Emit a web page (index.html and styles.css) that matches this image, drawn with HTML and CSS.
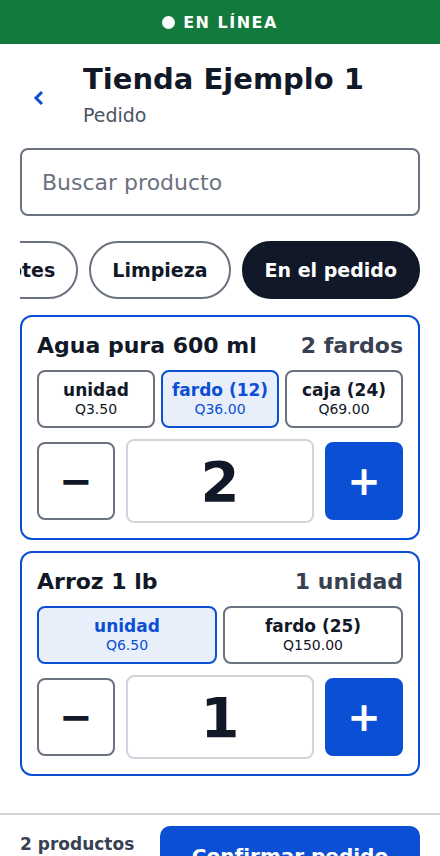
FILE: index.html
```html
<!DOCTYPE html>
<html lang="es">
<head>
  <meta charset="UTF-8">
  <title>Pedido - Tienda Ejemplo 1</title>
  <link rel="stylesheet" href="styles.css">
</head>
<body>
  <div class="status"><span class="status-dot"></span>EN LÍNEA</div>

  <header class="top">
    <button class="back" aria-label="Volver">
      <svg width="12" height="16" viewBox="0 0 12 16">
        <polyline points="9,2 3,8 9,14" fill="none" stroke="#0b50d4" stroke-width="3"/>
      </svg>
    </button>
    <div class="top-text">
      <h1>Tienda Ejemplo 1</h1>
      <p>Pedido</p>
    </div>
  </header>

  <main class="page">
    <input class="search" type="text" placeholder="Buscar producto">

    <!-- categorias, desplazadas hasta el final -->
    <div class="chips">
      <button class="chip">Todos</button>
      <button class="chip">Bebidas</button>
      <button class="chip">Abarrotes</button>
      <button class="chip">Limpieza</button>
      <button class="chip active">En el pedido</button>
    </div>

    <section class="item">
      <div class="item-head">
        <span>Agua pura 600 ml</span>
        <span class="item-count">2 fardos</span>
      </div>
      <div class="units">
        <button class="unit">
          <span class="unit-name">unidad</span>
          <span class="unit-price">Q3.50</span>
        </button>
        <button class="unit on">
          <span class="unit-name">fardo (12)</span>
          <span class="unit-price">Q36.00</span>
        </button>
        <button class="unit">
          <span class="unit-name">caja (24)</span>
          <span class="unit-price">Q69.00</span>
        </button>
      </div>
      <div class="stepper">
        <button class="step">−</button>
        <div class="qty">2</div>
        <button class="step plus">+</button>
      </div>
    </section>

    <section class="item">
      <div class="item-head">
        <span>Arroz 1 lb</span>
        <span class="item-count">1 unidad</span>
      </div>
      <div class="units units-2">
        <button class="unit on">
          <span class="unit-name">unidad</span>
          <span class="unit-price">Q6.50</span>
        </button>
        <button class="unit">
          <span class="unit-name">fardo (25)</span>
          <span class="unit-price">Q150.00</span>
        </button>
      </div>
      <div class="stepper">
        <button class="step">−</button>
        <div class="qty">1</div>
        <button class="step plus">+</button>
      </div>
    </section>
  </main>

  <footer class="bar">
    <div class="summary">
      <div class="count">2 productos</div>
      <div class="total">Q78.50</div>
    </div>
    <button class="confirm">Confirmar pedido</button>
  </footer>
</body>
</html>
```

FILE: styles.css
```css
body {
  margin: 0;
  font-family: "DejaVu Sans", sans-serif;
  color: #111827;
  background: #fff;
}

button {
  font-family: inherit;
  cursor: pointer;
}

.status {
  height: 44px;
  background: #137a3d;
  color: #fff;
  display: flex;
  align-items: center;
  justify-content: center;
  gap: 8px;
  font-weight: bold;
  font-size: 16px;
  letter-spacing: 1.5px;
}

.status-dot {
  width: 13px;
  height: 13px;
  border-radius: 50%;
  background: #fff;
}

.top {
  display: flex;
  align-items: center;
  gap: 25px;
  padding: 18px 20px 20px;
}

.back {
  width: 38px;
  height: 44px;
  margin-top: 6px;
  padding: 0;
  border: 0;
  background: none;
  display: flex;
  align-items: center;
  justify-content: center;
}

.top h1 {
  margin: 0;
  font-size: 29px;
  line-height: 35px;
}

.top-text p {
  margin: 6px 0 0;
  font-size: 19px;
  line-height: 25px;
  color: #4b5563;
}

.page {
  padding: 0 20px;
}

.search {
  display: block;
  width: 100%;
  height: 68px;
  box-sizing: border-box;
  padding: 0 20px;
  border: 2px solid #6b7280;
  border-radius: 8px;
  font-family: inherit;
  font-size: 22px;
  color: #111827;
}

.search::placeholder {
  color: #6b7280;
}

.chips {
  display: flex;
  justify-content: flex-end;
  gap: 11px;
  overflow: hidden;
  margin-top: 25px;
}

.chip {
  flex-shrink: 0;
  height: 58px;
  box-sizing: border-box;
  padding: 0 21px;
  border: 2px solid #6b7280;
  border-radius: 29px;
  background: #fff;
  color: #111827;
  font-weight: bold;
  font-size: 19px;
}

.chip.active {
  background: #111827;
  border-color: #111827;
  color: #fff;
}

.item {
  margin-top: 16px;
  padding: 15px;
  border: 2px solid #0b50d4;
  border-radius: 12px;
  display: flex;
  flex-direction: column;
  gap: 11px;
}

.item + .item {
  margin-top: 11px;
}

.item-head {
  display: flex;
  justify-content: space-between;
  font-weight: bold;
  font-size: 22px;
  line-height: 27px;
}

.item-count {
  color: #374151;
}

.units {
  display: grid;
  grid-template-columns: repeat(3, 1fr);
  gap: 6px;
}

.units-2 {
  grid-template-columns: repeat(2, 1fr);
}

.unit {
  height: 58px;
  padding: 0;
  border: 2px solid #6b7280;
  border-radius: 8px;
  background: #fff;
  color: #111827;
  display: flex;
  flex-direction: column;
  align-items: center;
  justify-content: center;
}

.unit-name {
  font-weight: bold;
  font-size: 17px;
  line-height: 20px;
}

.unit-price {
  font-size: 14px;
  line-height: 18px;
}

.unit.on {
  background: #e8effb;
  border-color: #0b50d4;
  color: #0b50d4;
}

.stepper {
  display: flex;
  align-items: center;
  gap: 11px;
}

.step {
  width: 78px;
  height: 78px;
  flex-shrink: 0;
  box-sizing: border-box;
  padding: 0;
  border: 2px solid #6b7280;
  border-radius: 8px;
  background: #fff;
  color: #111827;
  font-weight: bold;
  font-size: 40px;
}

.step.plus {
  background: #0b50d4;
  border-color: #0b50d4;
  color: #fff;
}

.qty {
  flex: 1;
  height: 84px;
  box-sizing: border-box;
  border: 2px solid #d1d5db;
  border-radius: 8px;
  display: flex;
  align-items: center;
  justify-content: center;
  font-weight: bold;
  font-size: 56px;
}

.bar {
  margin-top: 37px;
  padding: 11px 20px;
  border-top: 2px solid #d1d5db;
  display: flex;
  align-items: flex-start;
}

.summary {
  flex: 1;
  padding-top: 7px;
}

.count {
  font-weight: bold;
  font-size: 17px;
  line-height: 22px;
  color: #374151;
}

.total {
  font-weight: bold;
  font-size: 24px;
}

.confirm {
  width: 260px;
  height: 60px;
  border: 0;
  border-radius: 10px;
  background: #0b50d4;
  color: #fff;
  font-weight: bold;
  font-size: 20px;
}
```
